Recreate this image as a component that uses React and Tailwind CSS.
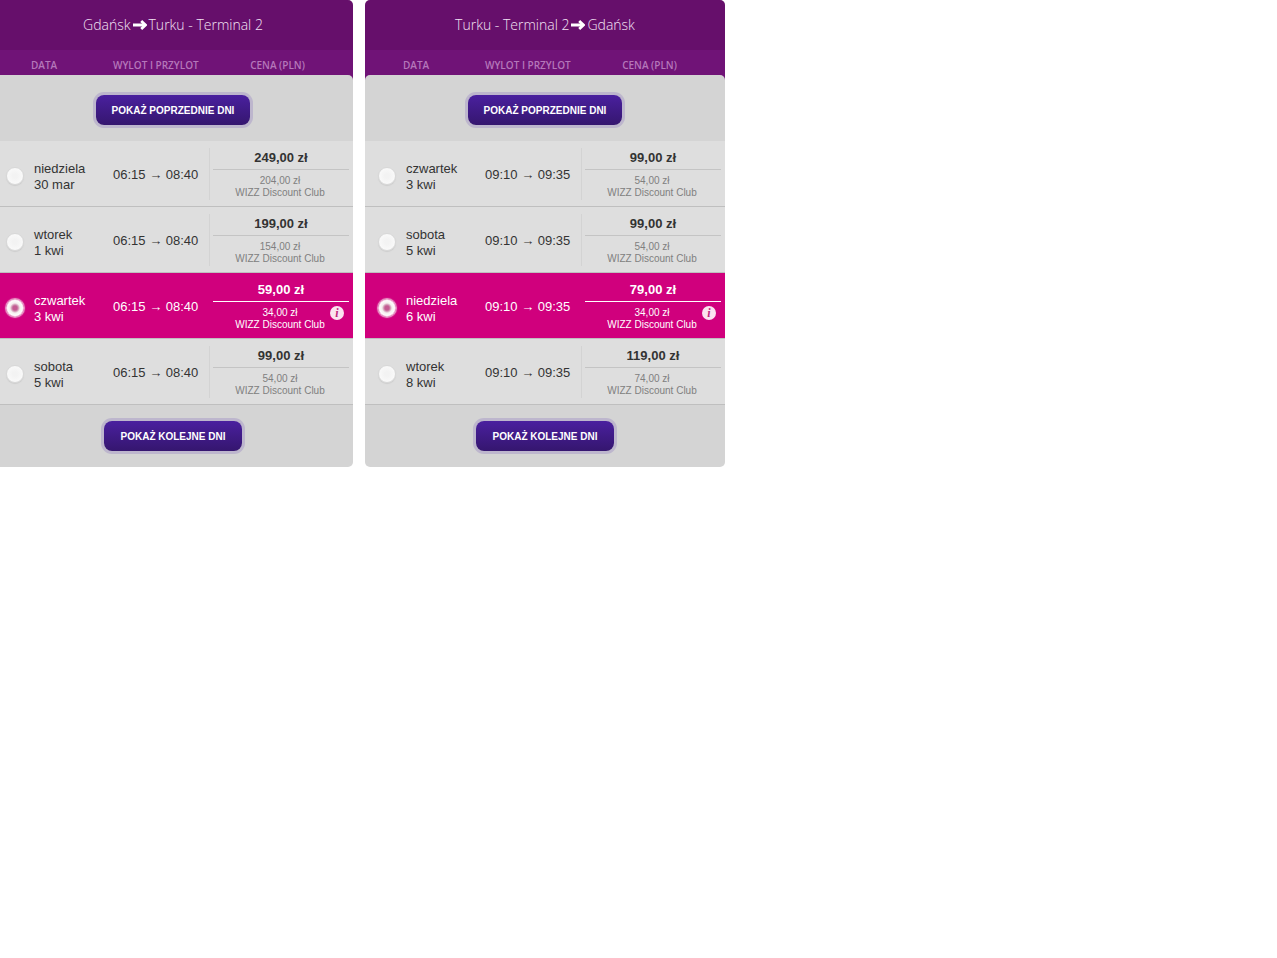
import { useState } from 'react'

const OUTBOUND = {
    id: 'outbound',
    from: 'Gdańsk',
    to: 'Turku - Terminal 2',
    selected: 2,
    flights: [
        { day: 'niedziela', date: '30 mar', departure: '06:15', arrival: '08:40', price: '249,00 zł', clubPrice: '204,00 zł' },
        { day: 'wtorek', date: '1 kwi', departure: '06:15', arrival: '08:40', price: '199,00 zł', clubPrice: '154,00 zł' },
        { day: 'czwartek', date: '3 kwi', departure: '06:15', arrival: '08:40', price: '59,00 zł', clubPrice: '34,00 zł' },
        { day: 'sobota', date: '5 kwi', departure: '06:15', arrival: '08:40', price: '99,00 zł', clubPrice: '54,00 zł' },
    ],
}

const INBOUND = {
    id: 'inbound',
    from: 'Turku - Terminal 2',
    to: 'Gdańsk',
    selected: 2,
    flights: [
        { day: 'czwartek', date: '3 kwi', departure: '09:10', arrival: '09:35', price: '99,00 zł', clubPrice: '54,00 zł' },
        { day: 'sobota', date: '5 kwi', departure: '09:10', arrival: '09:35', price: '99,00 zł', clubPrice: '54,00 zł' },
        { day: 'niedziela', date: '6 kwi', departure: '09:10', arrival: '09:35', price: '79,00 zł', clubPrice: '34,00 zł' },
        { day: 'wtorek', date: '8 kwi', departure: '09:10', arrival: '09:35', price: '119,00 zł', clubPrice: '74,00 zł' },
    ],
}

function RouteArrow() {
    return (
        <svg width="14" height="12" viewBox="0 0 14 12" fill="none" stroke="white" aria-hidden="true">
            <path d="M0 7h12" strokeWidth="3" />
            <path d="M8.2 3l4.2 4-4.2 4" strokeWidth="2.8" />
        </svg>
    )
}

function DaysButton({ children }) {
    return (
        <button
            type="button"
            className="h-[30px] rounded-lg bg-linear-to-b from-[#4a209f] to-[#35166f] px-4 text-[10px] font-bold text-white ring-3 ring-[#bdb6cd]"
        >
            {children}
        </button>
    )
}

// One row = one flight
function FlightRow({ flight, group, index, active, onSelect }) {
    const inputId = `${group}-${index}`

    return (
        <tr className={`h-[66px] ${active ? 'bg-[#d0007d] text-white' : 'bg-[#dedede] text-[#333]'}`}>
            <td className="border-b border-[#bfbfbf] p-0 pt-1 pl-3">
                <div className="flex items-center gap-[9px]">
                    <input
                        type="radio"
                        id={inputId}
                        name={group}
                        checked={active}
                        onChange={() => onSelect(index)}
                        className="m-px size-[18px] shrink-0 appearance-none rounded-full border border-[#d8d8d8] bg-[radial-gradient(circle,#f3f3f3_20%,#fafafa_75%)] shadow-[0_1px_1px_#cccccc] checked:border-[#f3c3dd] checked:bg-[radial-gradient(circle,#c45b92_2px,#cc86aa_3px,#f4f0ee_5px,#ffffff_8px)] checked:shadow-[0_0_1px_1px_#e9a6cc]"
                    />
                    <label htmlFor={inputId} className="pt-0.5 leading-4">
                        {flight.day}
                        <br />
                        {flight.date}
                    </label>
                </div>
            </td>
            <td className="border-b border-[#bfbfbf] p-0 pl-2 whitespace-nowrap">
                <div className={`flex h-[52px] items-center border-r pt-0.5 ${active ? 'border-transparent' : 'border-[#d3d3d3]'}`}>
                    {flight.departure} → {flight.arrival}
                </div>
            </td>
            <td className="relative border-b border-[#bfbfbf] p-0 pr-1 pl-[3px] text-center">
                <div className={`h-[23px] border-b pt-px leading-5 font-bold ${active ? 'border-white' : 'border-[#c4c4c4]'}`}>
                    {flight.price}
                </div>
                <div className={`pt-[5px] pr-0.5 pb-0.5 text-[10px] leading-3 ${active ? 'text-white' : 'text-[#808080]'}`}>
                    {flight.clubPrice}
                    <br />
                    WIZZ Discount Club
                </div>
                {active && (
                    <button
                        type="button"
                        aria-label="WIZZ Discount Club"
                        className="absolute right-[9px] bottom-[18px] flex size-[14px] items-center justify-center rounded-full bg-[#fbe3f0] font-['Liberation_Serif',serif] text-[12px] leading-none font-bold text-[#c0287f] italic"
                    >
                        i
                    </button>
                )}
            </td>
        </tr>
    )
}

function FlightPanel({ route }) {
    const [selected, setSelected] = useState(route.selected)

    return (
        <section className="min-w-0 flex-1 overflow-hidden rounded-[5px] bg-[#d4d4d4]">
            <h2 className="flex h-[50px] items-center justify-center gap-0.5 bg-[#660f6b] pb-0.5 font-['Open_Sans',sans-serif] text-[14px] font-light text-[#f3e3f4]">
                <span>{route.from}</span>
                <RouteArrow />
                <span>{route.to}</span>
            </h2>

            <table className="w-full table-fixed border-separate border-spacing-0">
                <colgroup>
                    <col className="w-[112px]" />
                    <col className="w-[105px]" />
                    <col />
                </colgroup>
                <thead>
                    <tr className="h-[25px] bg-[#701377] font-['Open_Sans',sans-serif] text-[10px] leading-4 text-[#b577ba]">
                        <th className="p-0 pt-[5px] pl-[38px] text-left font-semibold">DATA</th>
                        <th className="p-0 pt-[5px] pl-2 text-left font-semibold whitespace-nowrap">WYLOT I PRZYLOT</th>
                        <th className="p-0 pt-[5px] pr-2 text-center font-semibold">CENA (PLN)</th>
                    </tr>
                </thead>
                <tbody>
                    <tr>
                        <td colSpan={3} className="bg-[#701377] p-0">
                            <div className="flex h-[66px] items-center justify-center rounded-t-[5px] bg-[#d4d4d4] pt-1">
                                <DaysButton>POKAŻ POPRZEDNIE DNI</DaysButton>
                            </div>
                        </td>
                    </tr>
                    {route.flights.map((flight, index) => (
                        <FlightRow
                            key={flight.date}
                            flight={flight}
                            group={route.id}
                            index={index}
                            active={index === selected}
                            onSelect={setSelected}
                        />
                    ))}
                </tbody>
            </table>

            <div className="flex h-[62px] items-center justify-center">
                <DaysButton>POKAŻ KOLEJNE DNI</DaysButton>
            </div>
        </section>
    )
}

export default function App() {
    return (
        <div className="min-h-screen overflow-x-hidden bg-white font-['Liberation_Sans',Arial,sans-serif] text-[13px]">
            <main className="-ml-[7px] flex max-w-[732px] gap-3">
                <FlightPanel route={OUTBOUND} />
                <FlightPanel route={INBOUND} />
            </main>
        </div>
    )
}
